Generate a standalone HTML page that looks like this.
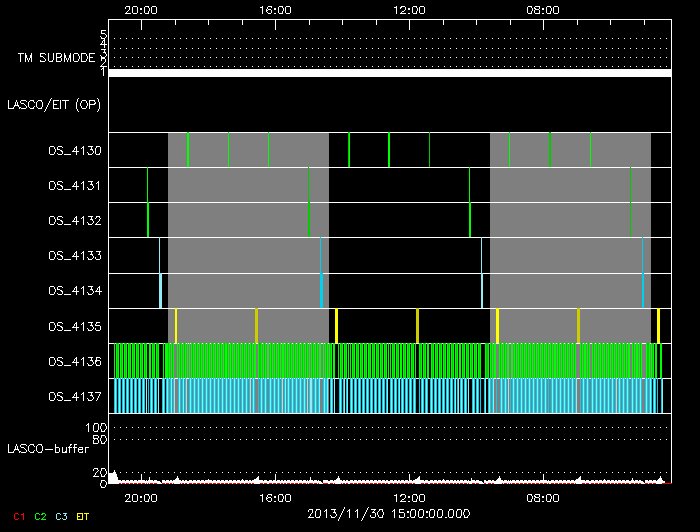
<!DOCTYPE html>
<html><head><meta charset="utf-8"><title>LASCO/EIT schedule plot</title>
<style>html,body{margin:0;padding:0;background:#000;font-family:"Liberation Sans",sans-serif;}svg{display:block}</style>
</head><body><svg width="700" height="532" viewBox="0 0 700 532" shape-rendering="crispEdges"><path fill="#ffffff" d="M126 6h4v1h-4zM133 6h4v1h-4zM145 6h4v1h-4zM152 6h4v1h-4zM262 6h1v1h-1zM268 6h4v1h-4zM279 6h4v1h-4zM286 6h4v1h-4zM396 6h1v1h-1zM401 6h4v1h-4zM413 6h4v1h-4zM420 6h4v1h-4zM528 6h4v1h-4zM535 6h5v1h-5zM547 6h4v1h-4zM554 6h4v1h-4zM148 7h1v1h-1zM260 7h3v1h-3zM271 7h1v1h-1zM282 7h1v1h-1zM394 7h3v1h-3zM400 7h2v1h-2zM416 7h1v1h-1zM531 7h1v1h-1zM534 7h1v1h-1zM550 7h1v1h-1zM125 7h1v2h-1zM267 7h1v2h-1zM400 8h1v1h-1zM534 8h2v1h-2zM539 7h1v2h-1zM129 7h1v3h-1zM140 8h2v2h-2zM266 9h1v1h-1zM268 9h3v1h-3zM274 8h2v2h-2zM405 7h1v3h-1zM408 8h2v2h-2zM535 9h4v1h-4zM542 8h2v2h-2zM128 10h1v1h-1zM149 8h1v3h-1zM266 10h2v1h-2zM283 8h1v3h-1zM404 10h1v1h-1zM417 8h1v3h-1zM532 8h1v3h-1zM551 8h1v3h-1zM127 11h1v1h-1zM266 11h1v1h-1zM402 11h2v1h-2zM126 12h1v1h-1zM132 7h1v6h-1zM137 7h1v6h-1zM144 7h1v6h-1zM148 11h1v2h-1zM151 7h1v6h-1zM156 7h1v6h-1zM267 12h1v1h-1zM271 10h1v3h-1zM278 7h1v6h-1zM282 11h1v2h-1zM285 7h1v6h-1zM290 7h1v6h-1zM401 12h1v1h-1zM412 7h1v6h-1zM416 11h1v2h-1zM419 7h1v6h-1zM424 7h1v6h-1zM527 7h1v6h-1zM531 11h1v2h-1zM534 10h1v3h-1zM539 10h1v3h-1zM546 7h1v6h-1zM550 11h1v2h-1zM553 7h1v6h-1zM558 7h1v6h-1zM125 13h6v1h-6zM133 13h4v1h-4zM140 13h2v1h-2zM145 13h4v1h-4zM152 13h4v1h-4zM262 8h1v6h-1zM268 13h3v1h-3zM274 13h2v1h-2zM279 13h4v1h-4zM286 13h4v1h-4zM396 8h1v6h-1zM400 13h6v1h-6zM408 13h2v1h-2zM413 13h4v1h-4zM420 13h4v1h-4zM528 13h4v1h-4zM535 13h5v1h-5zM542 13h2v1h-2zM547 13h4v1h-4zM554 13h4v1h-4zM108 19h564v1h-564zM175 20h1v5h-1zM208 20h1v5h-1zM242 20h1v5h-1zM309 20h1v5h-1zM342 20h1v5h-1zM376 20h1v5h-1zM443 20h1v5h-1zM476 20h1v5h-1zM510 20h1v5h-1zM577 20h1v5h-1zM610 20h1v5h-1zM644 20h1v5h-1zM141 20h1v10h-1zM275 20h1v10h-1zM409 20h1v10h-1zM543 20h1v10h-1zM101 30h5v1h-5zM101 31h1v2h-1zM101 33h4v1h-4zM105 34h1v1h-1zM100 36h1v1h-1zM106 35h1v2h-1zM101 37h1v1h-1zM105 37h1v1h-1zM101 38h4v1h-4zM114 38h1v1h-1zM120 38h1v1h-1zM126 38h1v1h-1zM132 38h1v1h-1zM138 38h1v1h-1zM144 38h1v1h-1zM150 38h1v1h-1zM156 38h1v1h-1zM162 38h1v1h-1zM168 38h1v1h-1zM174 38h1v1h-1zM180 38h1v1h-1zM186 38h1v1h-1zM192 38h1v1h-1zM198 38h1v1h-1zM204 38h1v1h-1zM210 38h1v1h-1zM216 38h1v1h-1zM222 38h1v1h-1zM228 38h1v1h-1zM234 38h1v1h-1zM240 38h1v1h-1zM246 38h1v1h-1zM252 38h1v1h-1zM258 38h1v1h-1zM264 38h1v1h-1zM270 38h1v1h-1zM276 38h1v1h-1zM282 38h1v1h-1zM288 38h1v1h-1zM294 38h1v1h-1zM300 38h1v1h-1zM306 38h1v1h-1zM312 38h1v1h-1zM318 38h1v1h-1zM324 38h1v1h-1zM330 38h1v1h-1zM336 38h1v1h-1zM342 38h1v1h-1zM348 38h1v1h-1zM354 38h1v1h-1zM360 38h1v1h-1zM366 38h1v1h-1zM372 38h1v1h-1zM378 38h1v1h-1zM384 38h1v1h-1zM390 38h1v1h-1zM396 38h1v1h-1zM402 38h1v1h-1zM408 38h1v1h-1zM414 38h1v1h-1zM420 38h1v1h-1zM426 38h1v1h-1zM432 38h1v1h-1zM438 38h1v1h-1zM444 38h1v1h-1zM450 38h1v1h-1zM456 38h1v1h-1zM462 38h1v1h-1zM468 38h1v1h-1zM474 38h1v1h-1zM480 38h1v1h-1zM486 38h1v1h-1zM492 38h1v1h-1zM498 38h1v1h-1zM504 38h1v1h-1zM510 38h1v1h-1zM516 38h1v1h-1zM522 38h1v1h-1zM528 38h1v1h-1zM534 38h1v1h-1zM540 38h1v1h-1zM546 38h1v1h-1zM552 38h1v1h-1zM558 38h1v1h-1zM564 38h1v1h-1zM570 38h1v1h-1zM576 38h1v1h-1zM582 38h1v1h-1zM588 38h1v1h-1zM594 38h1v1h-1zM600 38h1v1h-1zM606 38h1v1h-1zM612 38h1v1h-1zM618 38h1v1h-1zM624 38h1v1h-1zM630 38h1v1h-1zM636 38h1v1h-1zM642 38h1v1h-1zM648 38h1v1h-1zM654 38h1v1h-1zM660 38h1v1h-1zM666 38h1v1h-1zM104 39h1v1h-1zM103 40h2v1h-2zM102 41h1v2h-1zM101 43h1v1h-1zM104 41h1v3h-1zM100 44h7v1h-7zM104 45h1v3h-1zM114 48h1v1h-1zM120 48h1v1h-1zM126 48h1v1h-1zM132 48h1v1h-1zM138 48h1v1h-1zM144 48h1v1h-1zM150 48h1v1h-1zM156 48h1v1h-1zM162 48h1v1h-1zM168 48h1v1h-1zM174 48h1v1h-1zM180 48h1v1h-1zM186 48h1v1h-1zM192 48h1v1h-1zM198 48h1v1h-1zM204 48h1v1h-1zM210 48h1v1h-1zM216 48h1v1h-1zM222 48h1v1h-1zM228 48h1v1h-1zM234 48h1v1h-1zM240 48h1v1h-1zM246 48h1v1h-1zM252 48h1v1h-1zM258 48h1v1h-1zM264 48h1v1h-1zM270 48h1v1h-1zM276 48h1v1h-1zM282 48h1v1h-1zM288 48h1v1h-1zM294 48h1v1h-1zM300 48h1v1h-1zM306 48h1v1h-1zM312 48h1v1h-1zM318 48h1v1h-1zM324 48h1v1h-1zM330 48h1v1h-1zM336 48h1v1h-1zM342 48h1v1h-1zM348 48h1v1h-1zM354 48h1v1h-1zM360 48h1v1h-1zM366 48h1v1h-1zM372 48h1v1h-1zM378 48h1v1h-1zM384 48h1v1h-1zM390 48h1v1h-1zM396 48h1v1h-1zM402 48h1v1h-1zM408 48h1v1h-1zM414 48h1v1h-1zM420 48h1v1h-1zM426 48h1v1h-1zM432 48h1v1h-1zM438 48h1v1h-1zM444 48h1v1h-1zM450 48h1v1h-1zM456 48h1v1h-1zM462 48h1v1h-1zM468 48h1v1h-1zM474 48h1v1h-1zM480 48h1v1h-1zM486 48h1v1h-1zM492 48h1v1h-1zM498 48h1v1h-1zM504 48h1v1h-1zM510 48h1v1h-1zM516 48h1v1h-1zM522 48h1v1h-1zM528 48h1v1h-1zM534 48h1v1h-1zM540 48h1v1h-1zM546 48h1v1h-1zM552 48h1v1h-1zM558 48h1v1h-1zM564 48h1v1h-1zM570 48h1v1h-1zM576 48h1v1h-1zM582 48h1v1h-1zM588 48h1v1h-1zM594 48h1v1h-1zM600 48h1v1h-1zM606 48h1v1h-1zM612 48h1v1h-1zM618 48h1v1h-1zM624 48h1v1h-1zM630 48h1v1h-1zM636 48h1v1h-1zM642 48h1v1h-1zM648 48h1v1h-1zM654 48h1v1h-1zM660 48h1v1h-1zM666 48h1v1h-1zM101 49h5v1h-5zM104 50h1v2h-1zM103 52h3v1h-3zM18 53h6v1h-6zM40 53h5v1h-5zM56 53h5v1h-5zM74 53h4v1h-4zM81 53h5v1h-5zM89 53h6v1h-6zM105 53h1v1h-1zM25 53h1v2h-1zM31 53h1v2h-1zM45 54h1v1h-1zM64 53h1v2h-1zM70 53h1v2h-1zM40 54h1v2h-1zM61 54h1v2h-1zM78 54h1v2h-1zM86 54h1v2h-1zM100 55h1v1h-1zM106 54h1v2h-1zM40 56h3v1h-3zM56 54h1v3h-1zM60 56h2v1h-2zM89 54h1v3h-1zM101 56h1v1h-1zM105 56h1v1h-1zM25 55h2v3h-2zM30 55h2v3h-2zM43 57h1v1h-1zM56 57h5v1h-5zM64 55h2v3h-2zM69 55h2v3h-2zM89 57h4v1h-4zM114 57h1v1h-1zM120 57h1v1h-1zM126 57h1v1h-1zM132 57h1v1h-1zM138 57h1v1h-1zM144 57h1v1h-1zM150 57h1v1h-1zM156 57h1v1h-1zM162 57h1v1h-1zM168 57h1v1h-1zM174 57h1v1h-1zM180 57h1v1h-1zM186 57h1v1h-1zM192 57h1v1h-1zM198 57h1v1h-1zM204 57h1v1h-1zM210 57h1v1h-1zM216 57h1v1h-1zM222 57h1v1h-1zM228 57h1v1h-1zM234 57h1v1h-1zM240 57h1v1h-1zM246 57h1v1h-1zM252 57h1v1h-1zM258 57h1v1h-1zM264 57h1v1h-1zM270 57h1v1h-1zM276 57h1v1h-1zM282 57h1v1h-1zM288 57h1v1h-1zM294 57h1v1h-1zM300 57h1v1h-1zM306 57h1v1h-1zM312 57h1v1h-1zM318 57h1v1h-1zM324 57h1v1h-1zM330 57h1v1h-1zM336 57h1v1h-1zM342 57h1v1h-1zM348 57h1v1h-1zM354 57h1v1h-1zM360 57h1v1h-1zM366 57h1v1h-1zM372 57h1v1h-1zM378 57h1v1h-1zM384 57h1v1h-1zM390 57h1v1h-1zM396 57h1v1h-1zM402 57h1v1h-1zM408 57h1v1h-1zM414 57h1v1h-1zM420 57h1v1h-1zM426 57h1v1h-1zM432 57h1v1h-1zM438 57h1v1h-1zM444 57h1v1h-1zM450 57h1v1h-1zM456 57h1v1h-1zM462 57h1v1h-1zM468 57h1v1h-1zM474 57h1v1h-1zM480 57h1v1h-1zM486 57h1v1h-1zM492 57h1v1h-1zM498 57h1v1h-1zM504 57h1v1h-1zM510 57h1v1h-1zM516 57h1v1h-1zM522 57h1v1h-1zM528 57h1v1h-1zM534 57h1v1h-1zM540 57h1v1h-1zM546 57h1v1h-1zM552 57h1v1h-1zM558 57h1v1h-1zM564 57h1v1h-1zM570 57h1v1h-1zM576 57h1v1h-1zM582 57h1v1h-1zM588 57h1v1h-1zM594 57h1v1h-1zM600 57h1v1h-1zM606 57h1v1h-1zM612 57h1v1h-1zM618 57h1v1h-1zM624 57h1v1h-1zM630 57h1v1h-1zM636 57h1v1h-1zM642 57h1v1h-1zM648 57h1v1h-1zM654 57h1v1h-1zM660 57h1v1h-1zM666 57h1v1h-1zM44 58h1v1h-1zM79 56h1v3h-1zM87 56h1v3h-1zM101 57h4v2h-4zM27 58h1v2h-1zM29 58h1v2h-1zM53 53h1v7h-1zM66 58h1v2h-1zM68 58h1v2h-1zM40 60h1v1h-1zM45 59h1v2h-1zM48 53h1v8h-1zM52 60h1v1h-1zM56 58h1v3h-1zM61 58h1v3h-1zM73 54h1v7h-1zM78 59h1v2h-1zM81 54h1v7h-1zM86 59h1v2h-1zM89 58h1v3h-1zM101 59h1v2h-1zM20 54h1v8h-1zM25 58h1v4h-1zM28 60h1v2h-1zM31 58h1v4h-1zM40 61h5v1h-5zM49 61h4v1h-4zM56 61h5v1h-5zM64 58h1v4h-1zM67 60h1v2h-1zM70 58h1v4h-1zM74 61h4v1h-4zM81 61h5v1h-5zM89 61h6v1h-6zM105 59h1v3h-1zM104 62h1v1h-1zM103 63h1v1h-1zM102 64h1v1h-1zM101 65h1v1h-1zM100 66h7v1h-7zM114 66h1v1h-1zM120 66h1v1h-1zM126 66h1v1h-1zM132 66h1v1h-1zM138 66h1v1h-1zM144 66h1v1h-1zM150 66h1v1h-1zM156 66h1v1h-1zM162 66h1v1h-1zM168 66h1v1h-1zM174 66h1v1h-1zM180 66h1v1h-1zM186 66h1v1h-1zM192 66h1v1h-1zM198 66h1v1h-1zM204 66h1v1h-1zM210 66h1v1h-1zM216 66h1v1h-1zM222 66h1v1h-1zM228 66h1v1h-1zM234 66h1v1h-1zM240 66h1v1h-1zM246 66h1v1h-1zM252 66h1v1h-1zM258 66h1v1h-1zM264 66h1v1h-1zM270 66h1v1h-1zM276 66h1v1h-1zM282 66h1v1h-1zM288 66h1v1h-1zM294 66h1v1h-1zM300 66h1v1h-1zM306 66h1v1h-1zM312 66h1v1h-1zM318 66h1v1h-1zM324 66h1v1h-1zM330 66h1v1h-1zM336 66h1v1h-1zM342 66h1v1h-1zM348 66h1v1h-1zM354 66h1v1h-1zM360 66h1v1h-1zM366 66h1v1h-1zM372 66h1v1h-1zM378 66h1v1h-1zM384 66h1v1h-1zM390 66h1v1h-1zM396 66h1v1h-1zM402 66h1v1h-1zM408 66h1v1h-1zM414 66h1v1h-1zM420 66h1v1h-1zM426 66h1v1h-1zM432 66h1v1h-1zM438 66h1v1h-1zM444 66h1v1h-1zM450 66h1v1h-1zM456 66h1v1h-1zM462 66h1v1h-1zM468 66h1v1h-1zM474 66h1v1h-1zM480 66h1v1h-1zM486 66h1v1h-1zM492 66h1v1h-1zM498 66h1v1h-1zM504 66h1v1h-1zM510 66h1v1h-1zM516 66h1v1h-1zM522 66h1v1h-1zM528 66h1v1h-1zM534 66h1v1h-1zM540 66h1v1h-1zM546 66h1v1h-1zM552 66h1v1h-1zM558 66h1v1h-1zM564 66h1v1h-1zM570 66h1v1h-1zM576 66h1v1h-1zM582 66h1v1h-1zM588 66h1v1h-1zM594 66h1v1h-1zM600 66h1v1h-1zM606 66h1v1h-1zM612 66h1v1h-1zM618 66h1v1h-1zM624 66h1v1h-1zM630 66h1v1h-1zM636 66h1v1h-1zM642 66h1v1h-1zM648 66h1v1h-1zM654 66h1v1h-1zM660 66h1v1h-1zM666 66h1v1h-1zM103 67h1v1h-1zM102 68h2v1h-2zM108 20h1v49h-1zM671 20h1v49h-1zM101 69h1v1h-1zM103 69h1v7h-1zM108 69h564v8h-564zM51 98h1v1h-1zM78 98h1v1h-1zM97 98h1v1h-1zM21 100h5v1h-5zM30 100h4v1h-4zM38 100h4v1h-4zM50 99h1v2h-1zM53 100h6v1h-6zM62 100h7v1h-7zM82 100h4v1h-4zM89 100h6v1h-6zM16 100h1v2h-1zM26 101h1v1h-1zM29 101h1v1h-1zM33 101h1v1h-1zM37 101h1v1h-1zM41 101h1v1h-1zM77 99h1v3h-1zM94 101h1v1h-1zM98 99h1v3h-1zM20 101h1v2h-1zM34 102h1v1h-1zM49 101h1v2h-1zM81 101h1v2h-1zM86 101h1v2h-1zM95 102h1v1h-1zM21 103h3v1h-3zM53 101h1v3h-1zM89 101h1v3h-1zM94 103h2v1h-2zM15 102h1v3h-1zM17 102h1v3h-1zM24 104h1v1h-1zM48 103h1v2h-1zM53 104h4v1h-4zM89 104h6v1h-6zM14 105h5v1h-5zM25 105h1v1h-1zM80 103h1v3h-1zM87 103h1v3h-1zM14 106h1v1h-1zM18 106h1v1h-1zM28 102h1v5h-1zM34 106h1v1h-1zM36 102h1v5h-1zM42 102h1v5h-1zM47 105h1v2h-1zM8 100h1v8h-1zM13 107h1v1h-1zM19 107h2v1h-2zM26 106h1v2h-1zM29 107h1v1h-1zM33 107h1v1h-1zM37 107h1v1h-1zM41 107h1v1h-1zM53 105h1v3h-1zM81 106h1v2h-1zM86 106h1v2h-1zM8 108h6v1h-6zM19 108h1v1h-1zM21 108h5v1h-5zM30 108h4v1h-4zM38 108h4v1h-4zM46 107h1v2h-1zM53 108h6v1h-6zM60 100h1v9h-1zM65 101h1v8h-1zM76 102h1v7h-1zM82 108h4v1h-4zM89 105h1v4h-1zM99 102h1v7h-1zM45 109h1v2h-1zM77 109h1v2h-1zM98 109h1v2h-1zM44 111h1v1h-1zM78 111h1v1h-1zM97 111h1v1h-1zM108 77h1v55h-1zM671 77h1v55h-1zM108 132h79v1h-79zM189 132h39v1h-39zM229 132h39v1h-39zM269 132h79v1h-79zM350 132h38v1h-38zM390 132h39v1h-39zM430 132h79v1h-79zM510 132h39v1h-39zM551 132h39v1h-39zM591 132h81v1h-81zM50 146h4v1h-4zM58 146h4v1h-4zM76 146h1v1h-1zM83 146h1v1h-1zM88 146h5v1h-5zM96 146h4v1h-4zM62 147h1v1h-1zM75 147h2v1h-2zM82 147h2v1h-2zM96 147h1v1h-1zM54 147h1v2h-1zM57 147h1v2h-1zM81 148h1v1h-1zM91 147h1v2h-1zM57 149h3v1h-3zM74 148h1v2h-1zM90 149h3v1h-3zM60 150h2v1h-2zM73 150h1v1h-1zM76 148h1v3h-1zM92 150h1v1h-1zM55 149h1v3h-1zM61 151h2v1h-2zM72 151h7v1h-7zM87 152h1v1h-1zM93 151h1v2h-1zM100 147h1v6h-1zM49 147h1v7h-1zM54 152h1v2h-1zM57 153h1v1h-1zM62 152h1v2h-1zM88 153h1v1h-1zM92 153h1v1h-1zM95 148h1v6h-1zM99 153h1v1h-1zM50 154h4v1h-4zM58 154h4v1h-4zM64 154h7v1h-7zM76 152h1v3h-1zM83 148h1v7h-1zM88 154h4v1h-4zM96 154h4v1h-4zM108 133h1v34h-1zM671 133h1v34h-1zM108 167h39v1h-39zM148 167h160v1h-160zM309 167h160v1h-160zM470 167h160v1h-160zM631 167h41v1h-41zM50 181h4v1h-4zM58 181h4v1h-4zM76 181h1v1h-1zM83 181h1v1h-1zM88 181h5v1h-5zM98 181h1v1h-1zM62 182h1v1h-1zM75 182h2v1h-2zM82 182h2v1h-2zM97 182h2v1h-2zM54 182h1v2h-1zM57 182h1v2h-1zM81 183h1v1h-1zM91 182h1v2h-1zM96 183h1v1h-1zM57 184h3v1h-3zM74 183h1v2h-1zM90 184h3v1h-3zM60 185h2v1h-2zM73 185h1v1h-1zM76 183h1v3h-1zM92 185h1v1h-1zM55 184h1v3h-1zM61 186h2v1h-2zM72 186h7v1h-7zM87 187h1v1h-1zM93 186h1v2h-1zM49 182h1v7h-1zM54 187h1v2h-1zM57 188h1v1h-1zM62 187h1v2h-1zM88 188h1v1h-1zM92 188h1v1h-1zM50 189h4v1h-4zM58 189h4v1h-4zM64 189h7v1h-7zM76 187h1v3h-1zM83 183h1v7h-1zM88 189h4v1h-4zM98 183h1v7h-1zM108 168h1v34h-1zM671 168h1v34h-1zM108 202h39v1h-39zM149 202h159v1h-159zM310 202h159v1h-159zM471 202h159v1h-159zM631 202h41v1h-41zM50 216h4v1h-4zM58 216h4v1h-4zM76 216h1v1h-1zM83 216h1v1h-1zM88 216h5v1h-5zM96 216h4v1h-4zM62 217h1v1h-1zM75 217h2v1h-2zM82 217h2v1h-2zM96 217h1v1h-1zM99 217h1v1h-1zM54 217h1v2h-1zM57 217h1v2h-1zM81 218h1v1h-1zM91 217h1v2h-1zM95 218h1v1h-1zM100 218h1v1h-1zM57 219h3v1h-3zM74 218h1v2h-1zM90 219h3v1h-3zM60 220h2v1h-2zM73 220h1v1h-1zM76 218h1v3h-1zM92 220h1v1h-1zM99 219h1v2h-1zM55 219h1v3h-1zM61 221h2v1h-2zM72 221h7v1h-7zM98 221h1v1h-1zM87 222h1v1h-1zM93 221h1v2h-1zM97 222h1v1h-1zM49 217h1v7h-1zM54 222h1v2h-1zM57 223h1v1h-1zM62 222h1v2h-1zM88 223h1v1h-1zM92 223h1v1h-1zM96 223h1v1h-1zM50 224h4v1h-4zM58 224h4v1h-4zM64 224h7v1h-7zM76 222h1v3h-1zM83 218h1v7h-1zM88 224h4v1h-4zM95 224h6v1h-6zM108 203h1v34h-1zM671 203h1v34h-1zM108 237h51v1h-51zM160 237h160v1h-160zM321 237h160v1h-160zM482 237h160v1h-160zM643 237h29v1h-29zM50 251h4v1h-4zM58 251h4v1h-4zM76 251h1v1h-1zM83 251h1v1h-1zM88 251h5v1h-5zM96 251h5v1h-5zM62 252h1v1h-1zM75 252h2v1h-2zM82 252h2v1h-2zM54 252h1v2h-1zM57 252h1v2h-1zM81 253h1v1h-1zM91 252h1v2h-1zM99 252h1v2h-1zM57 254h3v1h-3zM74 253h1v2h-1zM90 254h3v1h-3zM98 254h2v1h-2zM60 255h2v1h-2zM73 255h1v1h-1zM76 253h1v3h-1zM92 255h1v1h-1zM55 254h1v3h-1zM61 256h2v1h-2zM72 256h7v1h-7zM87 257h1v1h-1zM93 256h1v2h-1zM49 252h1v7h-1zM54 257h1v2h-1zM57 258h1v1h-1zM62 257h1v2h-1zM88 258h1v1h-1zM92 258h1v1h-1zM95 257h1v2h-1zM100 255h1v4h-1zM50 259h4v1h-4zM58 259h4v1h-4zM64 259h7v1h-7zM76 257h1v3h-1zM83 253h1v7h-1zM88 259h4v1h-4zM96 259h4v1h-4zM108 238h1v35h-1zM671 238h1v35h-1zM108 273h51v1h-51zM162 273h158v1h-158zM323 273h158v1h-158zM483 273h159v1h-159zM644 273h28v1h-28zM50 286h4v1h-4zM58 286h4v1h-4zM76 286h1v1h-1zM83 286h1v1h-1zM88 286h5v1h-5zM99 286h1v1h-1zM62 287h1v1h-1zM75 287h2v1h-2zM82 287h2v1h-2zM98 287h2v1h-2zM54 287h1v2h-1zM57 287h1v2h-1zM81 288h1v1h-1zM91 287h1v2h-1zM57 289h3v1h-3zM74 288h1v2h-1zM90 289h3v1h-3zM97 288h1v2h-1zM60 290h2v1h-2zM73 290h1v1h-1zM76 288h1v3h-1zM92 290h1v1h-1zM96 290h1v1h-1zM99 288h1v3h-1zM55 289h1v3h-1zM61 291h2v1h-2zM72 291h7v1h-7zM95 291h7v1h-7zM87 292h1v1h-1zM93 291h1v2h-1zM49 287h1v7h-1zM54 292h1v2h-1zM57 293h1v1h-1zM62 292h1v2h-1zM88 293h1v1h-1zM92 293h1v1h-1zM50 294h4v1h-4zM58 294h4v1h-4zM64 294h7v1h-7zM76 292h1v3h-1zM83 288h1v7h-1zM88 294h4v1h-4zM99 292h1v3h-1zM108 274h1v34h-1zM671 274h1v34h-1zM108 308h67v1h-67zM177 308h78v1h-78zM258 308h77v1h-77zM338 308h78v1h-78zM419 308h77v1h-77zM499 308h78v1h-78zM580 308h77v1h-77zM660 308h12v1h-12zM50 322h4v1h-4zM58 322h4v1h-4zM76 322h1v1h-1zM83 322h1v1h-1zM88 322h5v1h-5zM96 322h4v1h-4zM62 323h1v1h-1zM75 323h2v1h-2zM82 323h2v1h-2zM96 323h1v1h-1zM54 323h1v2h-1zM57 323h1v2h-1zM81 324h1v1h-1zM91 323h1v2h-1zM95 324h1v1h-1zM57 325h3v1h-3zM74 324h1v2h-1zM90 325h3v1h-3zM95 325h5v1h-5zM60 326h2v1h-2zM73 326h1v1h-1zM76 324h1v3h-1zM92 326h1v1h-1zM55 325h1v3h-1zM61 327h2v1h-2zM72 327h7v1h-7zM87 328h1v1h-1zM93 327h1v2h-1zM49 323h1v7h-1zM54 328h1v2h-1zM57 329h1v1h-1zM62 328h1v2h-1zM88 329h1v1h-1zM92 329h1v1h-1zM95 328h1v2h-1zM100 326h1v4h-1zM50 330h4v1h-4zM58 330h4v1h-4zM64 330h7v1h-7zM76 328h1v3h-1zM83 324h1v7h-1zM88 330h4v1h-4zM96 330h4v1h-4zM108 309h1v34h-1zM671 309h1v34h-1zM108 343h6v1h-6zM115 343h1v1h-1zM119 343h1v1h-1zM123 343h1v1h-1zM127 343h1v1h-1zM131 343h1v1h-1zM135 343h1v1h-1zM139 343h1v1h-1zM143 343h1v1h-1zM147 343h2v1h-2zM151 343h1v1h-1zM155 343h1v1h-1zM159 343h4v1h-4zM164 343h1v1h-1zM170 343h1v1h-1zM174 343h3v1h-3zM178 343h1v1h-1zM182 343h1v1h-1zM186 343h1v1h-1zM188 343h1v1h-1zM190 343h1v1h-1zM194 343h1v1h-1zM198 343h1v1h-1zM202 343h1v1h-1zM206 343h1v1h-1zM210 343h1v1h-1zM214 343h1v1h-1zM218 343h1v1h-1zM222 343h1v1h-1zM229 343h1v1h-1zM233 343h1v1h-1zM237 343h1v1h-1zM241 343h1v1h-1zM245 343h1v1h-1zM249 343h1v1h-1zM253 343h1v1h-1zM256 343h2v1h-2zM262 343h1v1h-1zM266 343h1v1h-1zM269 343h1v1h-1zM273 343h1v1h-1zM277 343h1v1h-1zM281 343h1v1h-1zM284 343h1v1h-1zM288 343h1v1h-1zM292 343h1v1h-1zM296 343h1v1h-1zM300 343h1v1h-1zM304 343h1v1h-1zM308 343h1v1h-1zM310 343h1v1h-1zM314 343h1v1h-1zM318 343h1v1h-1zM321 343h2v1h-2zM324 343h1v1h-1zM328 343h1v1h-1zM332 343h1v1h-1zM335 343h3v1h-3zM339 343h1v1h-1zM343 343h1v1h-1zM347 343h1v1h-1zM349 343h1v1h-1zM351 343h1v1h-1zM355 343h1v1h-1zM359 343h1v1h-1zM363 343h1v1h-1zM367 343h1v1h-1zM371 343h1v1h-1zM375 343h1v1h-1zM379 343h1v1h-1zM383 343h1v1h-1zM387 343h1v1h-1zM389 343h1v1h-1zM391 343h1v1h-1zM395 343h1v1h-1zM399 343h1v1h-1zM402 343h1v1h-1zM406 343h1v1h-1zM410 343h1v1h-1zM414 343h1v1h-1zM416 343h3v1h-3zM422 343h1v1h-1zM426 343h1v1h-1zM429 343h2v1h-2zM434 343h1v1h-1zM438 343h1v1h-1zM442 343h1v1h-1zM446 343h1v1h-1zM450 343h1v1h-1zM454 343h1v1h-1zM458 343h1v1h-1zM461 343h1v1h-1zM465 343h1v1h-1zM469 343h1v1h-1zM473 343h1v1h-1zM477 343h1v1h-1zM481 343h4v1h-4zM489 343h1v1h-1zM493 343h1v1h-1zM496 343h3v1h-3zM502 343h1v1h-1zM506 343h1v1h-1zM509 343h2v1h-2zM513 343h1v1h-1zM517 343h1v1h-1zM521 343h1v1h-1zM525 343h1v1h-1zM529 343h1v1h-1zM533 343h1v1h-1zM537 343h1v1h-1zM541 343h1v1h-1zM545 343h1v1h-1zM549 343h1v1h-1zM553 343h1v1h-1zM556 343h1v1h-1zM560 343h1v1h-1zM564 343h1v1h-1zM568 343h1v1h-1zM572 343h1v1h-1zM576 343h4v1h-4zM583 343h1v1h-1zM586 343h1v1h-1zM590 343h2v1h-2zM595 343h1v1h-1zM599 343h1v1h-1zM603 343h1v1h-1zM607 343h1v1h-1zM611 343h1v1h-1zM615 343h1v1h-1zM619 343h1v1h-1zM623 343h1v1h-1zM627 343h1v1h-1zM630 343h2v1h-2zM635 343h1v1h-1zM638 343h1v1h-1zM642 343h4v1h-4zM650 343h1v1h-1zM654 343h1v1h-1zM657 343h3v1h-3zM662 343h10v1h-10zM50 357h4v1h-4zM58 357h4v1h-4zM76 357h1v1h-1zM83 357h1v1h-1zM88 357h5v1h-5zM96 357h4v1h-4zM62 358h1v1h-1zM75 358h2v1h-2zM82 358h2v1h-2zM100 358h1v1h-1zM54 358h1v2h-1zM57 358h1v2h-1zM81 359h1v1h-1zM91 358h1v2h-1zM96 358h1v2h-1zM57 360h3v1h-3zM74 359h1v2h-1zM90 360h3v1h-3zM95 360h5v1h-5zM60 361h2v1h-2zM73 361h1v1h-1zM76 359h1v3h-1zM92 361h1v1h-1zM95 361h2v1h-2zM55 360h1v3h-1zM61 362h2v1h-2zM72 362h7v1h-7zM87 363h1v1h-1zM93 362h1v2h-1zM95 362h1v2h-1zM49 358h1v7h-1zM54 363h1v2h-1zM57 364h1v1h-1zM62 363h1v2h-1zM88 364h1v1h-1zM92 364h1v1h-1zM96 364h1v1h-1zM100 361h1v4h-1zM50 365h4v1h-4zM58 365h4v1h-4zM64 365h7v1h-7zM76 363h1v3h-1zM83 359h1v7h-1zM88 365h4v1h-4zM96 365h4v1h-4zM108 344h1v34h-1zM671 344h1v34h-1zM108 378h6v1h-6zM117 378h1v1h-1zM121 378h1v1h-1zM125 378h1v1h-1zM129 378h1v1h-1zM133 378h1v1h-1zM137 378h1v1h-1zM141 378h1v1h-1zM145 378h1v1h-1zM147 378h1v1h-1zM149 378h1v1h-1zM153 378h1v1h-1zM157 378h1v1h-1zM159 378h3v1h-3zM165 378h1v1h-1zM169 378h1v1h-1zM172 378h1v1h-1zM175 378h3v1h-3zM181 378h1v1h-1zM184 378h1v1h-1zM187 378h2v1h-2zM192 378h1v1h-1zM196 378h1v1h-1zM200 378h1v1h-1zM204 378h1v1h-1zM208 378h1v1h-1zM212 378h1v1h-1zM216 378h1v1h-1zM220 378h1v1h-1zM224 378h1v1h-1zM228 378h1v1h-1zM232 378h1v1h-1zM236 378h1v1h-1zM240 378h1v1h-1zM244 378h1v1h-1zM248 378h1v1h-1zM251 378h1v1h-1zM255 378h3v1h-3zM259 378h1v1h-1zM263 378h1v1h-1zM267 378h2v1h-2zM272 378h1v1h-1zM276 378h1v1h-1zM280 378h1v1h-1zM283 378h1v1h-1zM286 378h1v1h-1zM290 378h1v1h-1zM294 378h1v1h-1zM298 378h1v1h-1zM302 378h1v1h-1zM306 378h1v1h-1zM308 378h1v1h-1zM313 378h1v1h-1zM317 378h1v1h-1zM320 378h3v1h-3zM328 378h2v1h-2zM333 378h1v1h-1zM335 378h4v1h-4zM342 378h1v1h-1zM345 378h1v1h-1zM348 378h2v1h-2zM353 378h1v1h-1zM357 378h1v1h-1zM361 378h1v1h-1zM365 378h1v1h-1zM369 378h1v1h-1zM373 378h1v1h-1zM377 378h1v1h-1zM381 378h1v1h-1zM385 378h1v1h-1zM388 378h2v1h-2zM393 378h1v1h-1zM397 378h1v1h-1zM400 378h1v1h-1zM404 378h1v1h-1zM408 378h1v1h-1zM412 378h1v1h-1zM416 378h3v1h-3zM420 378h1v1h-1zM424 378h1v1h-1zM428 378h2v1h-2zM433 378h1v1h-1zM437 378h1v1h-1zM441 378h1v1h-1zM445 378h1v1h-1zM449 378h1v1h-1zM453 378h1v1h-1zM456 378h1v1h-1zM459 378h1v1h-1zM463 378h1v1h-1zM467 378h1v1h-1zM469 378h3v1h-3zM475 378h1v1h-1zM479 378h1v1h-1zM481 378h3v1h-3zM486 378h2v1h-2zM491 378h1v1h-1zM494 378h2v1h-2zM497 378h3v1h-3zM503 378h1v1h-1zM507 378h1v1h-1zM509 378h1v1h-1zM511 378h1v1h-1zM515 378h1v1h-1zM519 378h1v1h-1zM523 378h1v1h-1zM527 378h1v1h-1zM531 378h1v1h-1zM535 378h1v1h-1zM539 378h1v1h-1zM543 378h1v1h-1zM547 378h1v1h-1zM549 378h2v1h-2zM554 378h1v1h-1zM558 378h1v1h-1zM562 378h1v1h-1zM566 378h1v1h-1zM570 378h1v1h-1zM574 378h1v1h-1zM577 378h3v1h-3zM581 378h1v1h-1zM585 378h1v1h-1zM589 378h2v1h-2zM594 378h1v1h-1zM598 378h1v1h-1zM602 378h1v1h-1zM606 378h1v1h-1zM610 378h1v1h-1zM614 378h1v1h-1zM617 378h1v1h-1zM621 378h1v1h-1zM625 378h1v1h-1zM629 378h2v1h-2zM634 378h1v1h-1zM638 378h1v1h-1zM642 378h3v1h-3zM648 378h1v1h-1zM652 378h1v1h-1zM656 378h1v1h-1zM658 378h3v1h-3zM663 378h9v1h-9zM50 392h4v1h-4zM58 392h4v1h-4zM76 392h1v1h-1zM83 392h1v1h-1zM88 392h5v1h-5zM95 392h6v1h-6zM62 393h1v1h-1zM75 393h2v1h-2zM82 393h2v1h-2zM100 393h1v1h-1zM54 393h1v2h-1zM57 393h1v2h-1zM81 394h1v1h-1zM91 393h1v2h-1zM57 395h3v1h-3zM74 394h1v2h-1zM90 395h3v1h-3zM99 394h1v2h-1zM60 396h2v1h-2zM73 396h1v1h-1zM76 394h1v3h-1zM92 396h1v1h-1zM55 395h1v3h-1zM61 397h2v1h-2zM72 397h7v1h-7zM98 396h1v2h-1zM87 398h1v1h-1zM93 397h1v2h-1zM49 393h1v7h-1zM54 398h1v2h-1zM57 399h1v1h-1zM62 398h1v2h-1zM88 399h1v1h-1zM92 399h1v1h-1zM97 398h1v2h-1zM50 400h4v1h-4zM58 400h4v1h-4zM64 400h7v1h-7zM76 398h1v3h-1zM83 394h1v7h-1zM88 400h4v1h-4zM96 400h1v1h-1zM108 379h1v34h-1zM671 379h1v34h-1zM108 413h564v1h-564zM88 423h1v1h-1zM94 423h4v1h-4zM101 423h4v1h-4zM87 424h2v1h-2zM94 424h1v1h-1zM86 425h1v1h-1zM101 424h1v2h-1zM105 424h1v2h-1zM114 427h1v1h-1zM120 427h1v1h-1zM126 427h1v1h-1zM132 427h1v1h-1zM138 427h1v1h-1zM144 427h1v1h-1zM150 427h1v1h-1zM156 427h1v1h-1zM162 427h1v1h-1zM168 427h1v1h-1zM174 427h1v1h-1zM180 427h1v1h-1zM186 427h1v1h-1zM192 427h1v1h-1zM198 427h1v1h-1zM204 427h1v1h-1zM210 427h1v1h-1zM216 427h1v1h-1zM222 427h1v1h-1zM228 427h1v1h-1zM234 427h1v1h-1zM240 427h1v1h-1zM246 427h1v1h-1zM252 427h1v1h-1zM258 427h1v1h-1zM264 427h1v1h-1zM270 427h1v1h-1zM276 427h1v1h-1zM282 427h1v1h-1zM288 427h1v1h-1zM294 427h1v1h-1zM300 427h1v1h-1zM306 427h1v1h-1zM312 427h1v1h-1zM318 427h1v1h-1zM324 427h1v1h-1zM330 427h1v1h-1zM336 427h1v1h-1zM342 427h1v1h-1zM348 427h1v1h-1zM354 427h1v1h-1zM360 427h1v1h-1zM366 427h1v1h-1zM372 427h1v1h-1zM378 427h1v1h-1zM384 427h1v1h-1zM390 427h1v1h-1zM396 427h1v1h-1zM402 427h1v1h-1zM408 427h1v1h-1zM414 427h1v1h-1zM420 427h1v1h-1zM426 427h1v1h-1zM432 427h1v1h-1zM438 427h1v1h-1zM444 427h1v1h-1zM450 427h1v1h-1zM456 427h1v1h-1zM462 427h1v1h-1zM468 427h1v1h-1zM474 427h1v1h-1zM480 427h1v1h-1zM486 427h1v1h-1zM492 427h1v1h-1zM498 427h1v1h-1zM504 427h1v1h-1zM510 427h1v1h-1zM516 427h1v1h-1zM522 427h1v1h-1zM528 427h1v1h-1zM534 427h1v1h-1zM540 427h1v1h-1zM546 427h1v1h-1zM552 427h1v1h-1zM558 427h1v1h-1zM564 427h1v1h-1zM570 427h1v1h-1zM576 427h1v1h-1zM582 427h1v1h-1zM588 427h1v1h-1zM594 427h1v1h-1zM600 427h1v1h-1zM606 427h1v1h-1zM612 427h1v1h-1zM618 427h1v1h-1zM624 427h1v1h-1zM630 427h1v1h-1zM636 427h1v1h-1zM642 427h1v1h-1zM648 427h1v1h-1zM654 427h1v1h-1zM660 427h1v1h-1zM666 427h1v1h-1zM100 426h1v3h-1zM106 426h1v3h-1zM98 424h1v6h-1zM105 429h1v1h-1zM93 425h1v6h-1zM97 430h1v1h-1zM101 429h1v2h-1zM104 430h1v1h-1zM88 425h1v7h-1zM94 431h4v1h-4zM101 431h4v1h-4zM93 435h5v1h-5zM101 435h4v1h-4zM93 436h1v2h-1zM98 436h1v2h-1zM101 436h1v2h-1zM105 436h1v2h-1zM93 438h5v1h-5zM94 439h1v1h-1zM97 439h1v1h-1zM114 439h1v1h-1zM120 439h1v1h-1zM126 439h1v1h-1zM132 439h1v1h-1zM138 439h1v1h-1zM144 439h1v1h-1zM150 439h1v1h-1zM156 439h1v1h-1zM162 439h1v1h-1zM168 439h1v1h-1zM174 439h1v1h-1zM180 439h1v1h-1zM186 439h1v1h-1zM192 439h1v1h-1zM198 439h1v1h-1zM204 439h1v1h-1zM210 439h1v1h-1zM216 439h1v1h-1zM222 439h1v1h-1zM228 439h1v1h-1zM234 439h1v1h-1zM240 439h1v1h-1zM246 439h1v1h-1zM252 439h1v1h-1zM258 439h1v1h-1zM264 439h1v1h-1zM270 439h1v1h-1zM276 439h1v1h-1zM282 439h1v1h-1zM288 439h1v1h-1zM294 439h1v1h-1zM300 439h1v1h-1zM306 439h1v1h-1zM312 439h1v1h-1zM318 439h1v1h-1zM324 439h1v1h-1zM330 439h1v1h-1zM336 439h1v1h-1zM342 439h1v1h-1zM348 439h1v1h-1zM354 439h1v1h-1zM360 439h1v1h-1zM366 439h1v1h-1zM372 439h1v1h-1zM378 439h1v1h-1zM384 439h1v1h-1zM390 439h1v1h-1zM396 439h1v1h-1zM402 439h1v1h-1zM408 439h1v1h-1zM414 439h1v1h-1zM420 439h1v1h-1zM426 439h1v1h-1zM432 439h1v1h-1zM438 439h1v1h-1zM444 439h1v1h-1zM450 439h1v1h-1zM456 439h1v1h-1zM462 439h1v1h-1zM468 439h1v1h-1zM474 439h1v1h-1zM480 439h1v1h-1zM486 439h1v1h-1zM492 439h1v1h-1zM498 439h1v1h-1zM504 439h1v1h-1zM510 439h1v1h-1zM516 439h1v1h-1zM522 439h1v1h-1zM528 439h1v1h-1zM534 439h1v1h-1zM540 439h1v1h-1zM546 439h1v1h-1zM552 439h1v1h-1zM558 439h1v1h-1zM564 439h1v1h-1zM570 439h1v1h-1zM576 439h1v1h-1zM582 439h1v1h-1zM588 439h1v1h-1zM594 439h1v1h-1zM600 439h1v1h-1zM606 439h1v1h-1zM612 439h1v1h-1zM618 439h1v1h-1zM624 439h1v1h-1zM630 439h1v1h-1zM636 439h1v1h-1zM642 439h1v1h-1zM648 439h1v1h-1zM654 439h1v1h-1zM660 439h1v1h-1zM666 439h1v1h-1zM100 438h1v3h-1zM106 438h1v3h-1zM105 441h1v1h-1zM93 440h1v3h-1zM98 440h1v3h-1zM101 441h1v2h-1zM104 442h1v1h-1zM93 443h5v1h-5zM101 443h4v1h-4zM21 444h5v1h-5zM30 444h4v1h-4zM38 444h4v1h-4zM70 444h2v1h-2zM74 444h3v1h-3zM16 444h1v2h-1zM26 445h1v1h-1zM29 445h1v1h-1zM33 445h1v1h-1zM37 445h1v1h-1zM41 445h1v1h-1zM70 445h1v1h-1zM20 445h1v2h-1zM34 446h1v1h-1zM55 444h1v3h-1zM69 446h1v1h-1zM74 445h1v2h-1zM21 447h3v1h-3zM55 447h4v1h-4zM68 447h4v1h-4zM73 447h4v1h-4zM79 447h4v1h-4zM85 447h4v1h-4zM15 446h1v3h-1zM17 446h1v3h-1zM24 448h1v1h-1zM78 448h1v1h-1zM82 448h1v1h-1zM14 449h5v1h-5zM25 449h1v1h-1zM45 449h8v1h-8zM78 449h5v1h-5zM14 450h1v1h-1zM18 450h1v1h-1zM28 446h1v5h-1zM34 450h1v1h-1zM36 446h1v5h-1zM42 446h1v5h-1zM66 447h1v4h-1zM8 444h1v8h-1zM13 451h1v1h-1zM19 451h2v1h-2zM26 450h1v2h-1zM29 451h1v1h-1zM33 451h1v1h-1zM37 451h1v1h-1zM41 451h1v1h-1zM55 448h1v4h-1zM59 448h1v4h-1zM62 447h1v5h-1zM65 451h2v1h-2zM78 450h1v2h-1zM82 451h1v1h-1zM8 452h6v1h-6zM19 452h1v1h-1zM21 452h5v1h-5zM30 452h4v1h-4zM38 452h4v1h-4zM55 452h4v1h-4zM62 452h5v1h-5zM69 448h1v5h-1zM74 448h1v5h-1zM79 452h4v1h-4zM85 448h1v5h-1zM94 468h4v1h-4zM101 468h4v1h-4zM97 469h1v1h-1zM93 469h1v2h-1zM98 470h1v1h-1zM101 469h1v2h-1zM105 469h1v2h-1zM97 471h1v1h-1zM114 470h1v2h-1zM96 472h1v1h-1zM108 414h1v59h-1zM113 472h3v1h-3zM120 472h1v1h-1zM126 472h1v1h-1zM132 472h1v1h-1zM138 472h1v1h-1zM144 472h1v1h-1zM150 472h1v1h-1zM156 472h1v1h-1zM162 472h1v1h-1zM168 472h1v1h-1zM174 472h1v1h-1zM180 472h1v1h-1zM186 472h1v1h-1zM192 472h1v1h-1zM198 472h1v1h-1zM204 472h1v1h-1zM210 472h1v1h-1zM216 472h1v1h-1zM222 472h1v1h-1zM228 472h1v1h-1zM234 472h1v1h-1zM240 472h1v1h-1zM246 472h1v1h-1zM252 472h1v1h-1zM258 472h1v1h-1zM264 472h1v1h-1zM270 472h1v1h-1zM276 472h1v1h-1zM282 472h1v1h-1zM288 472h1v1h-1zM294 472h1v1h-1zM300 472h1v1h-1zM306 472h1v1h-1zM312 472h1v1h-1zM318 472h1v1h-1zM324 472h1v1h-1zM330 472h1v1h-1zM336 472h1v1h-1zM342 472h1v1h-1zM348 472h1v1h-1zM354 472h1v1h-1zM360 472h1v1h-1zM366 472h1v1h-1zM372 472h1v1h-1zM378 472h1v1h-1zM384 472h1v1h-1zM390 472h1v1h-1zM396 472h1v1h-1zM402 472h1v1h-1zM408 472h1v1h-1zM414 472h1v1h-1zM420 472h1v1h-1zM426 472h1v1h-1zM432 472h1v1h-1zM438 472h1v1h-1zM444 472h1v1h-1zM450 472h1v1h-1zM456 472h1v1h-1zM462 472h1v1h-1zM468 472h1v1h-1zM474 472h1v1h-1zM480 472h1v1h-1zM486 472h1v1h-1zM492 472h1v1h-1zM498 472h1v1h-1zM504 472h1v1h-1zM510 472h1v1h-1zM516 472h1v1h-1zM522 472h1v1h-1zM528 472h1v1h-1zM534 472h1v1h-1zM540 472h1v1h-1zM546 472h1v1h-1zM552 472h1v1h-1zM558 472h1v1h-1zM564 472h1v1h-1zM570 472h1v1h-1zM576 472h1v1h-1zM582 472h1v1h-1zM588 472h1v1h-1zM594 472h1v1h-1zM600 472h1v1h-1zM606 472h1v1h-1zM612 472h1v1h-1zM618 472h1v1h-1zM624 472h1v1h-1zM630 472h1v1h-1zM636 472h1v1h-1zM642 472h1v1h-1zM648 472h1v1h-1zM654 472h1v1h-1zM660 472h1v1h-1zM666 472h1v1h-1zM100 471h1v3h-1zM106 471h1v3h-1zM108 473h8v1h-8zM95 473h1v2h-1zM105 474h1v1h-1zM94 475h1v1h-1zM101 474h1v2h-1zM104 475h1v1h-1zM93 476h6v1h-6zM101 476h4v1h-4zM108 474h9v3h-9zM258 476h1v1h-1zM419 476h1v1h-1zM580 476h1v1h-1zM177 476h1v2h-1zM257 477h2v1h-2zM338 476h1v2h-1zM418 477h2v1h-2zM499 476h1v2h-1zM579 477h2v1h-2zM660 476h1v2h-1zM176 478h3v1h-3zM256 478h3v1h-3zM337 478h3v1h-3zM417 478h3v1h-3zM498 478h3v1h-3zM578 478h3v1h-3zM659 478h3v1h-3zM108 477h10v3h-10zM141 474h1v6h-1zM149 477h1v3h-1zM175 479h4v1h-4zM208 479h1v1h-1zM242 479h1v1h-1zM254 479h5v1h-5zM275 474h1v6h-1zM310 477h1v3h-1zM336 479h4v1h-4zM409 474h1v6h-1zM415 479h5v1h-5zM443 479h1v1h-1zM471 478h1v2h-1zM497 479h4v1h-4zM543 474h1v6h-1zM576 479h5v1h-5zM604 479h1v1h-1zM632 478h1v2h-1zM658 479h4v1h-4zM101 480h4v1h-4zM108 480h13v1h-13zM122 480h3v1h-3zM126 480h3v1h-3zM130 480h3v1h-3zM134 480h3v1h-3zM138 480h7v1h-7zM146 480h1v1h-1zM148 480h5v1h-5zM154 480h3v1h-3zM162 480h3v1h-3zM166 480h3v1h-3zM170 480h2v1h-2zM173 480h8v1h-8zM182 480h2v1h-2zM185 480h2v1h-2zM189 480h3v1h-3zM193 480h3v1h-3zM197 480h3v1h-3zM201 480h3v1h-3zM205 480h7v1h-7zM213 480h3v1h-3zM217 480h3v1h-3zM221 480h3v1h-3zM225 480h3v1h-3zM229 480h3v1h-3zM233 480h3v1h-3zM237 480h3v1h-3zM241 480h3v1h-3zM245 480h3v1h-3zM249 480h2v1h-2zM252 480h11v1h-11zM264 480h3v1h-3zM269 480h3v1h-3zM273 480h3v1h-3zM277 480h3v1h-3zM281 480h2v1h-2zM284 480h2v1h-2zM287 480h3v1h-3zM291 480h3v1h-3zM295 480h3v1h-3zM299 480h3v1h-3zM303 480h3v1h-3zM307 480h1v1h-1zM309 480h4v1h-4zM314 480h3v1h-3zM318 480h1v1h-1zM323 480h5v1h-5zM330 480h3v1h-3zM334 480h8v1h-8zM343 480h2v1h-2zM346 480h2v1h-2zM350 480h3v1h-3zM354 480h3v1h-3zM358 480h3v1h-3zM362 480h3v1h-3zM366 480h3v1h-3zM370 480h3v1h-3zM374 480h3v1h-3zM378 480h3v1h-3zM382 480h3v1h-3zM386 480h2v1h-2zM390 480h3v1h-3zM394 480h3v1h-3zM398 480h2v1h-2zM401 480h3v1h-3zM405 480h3v1h-3zM409 480h3v1h-3zM413 480h11v1h-11zM425 480h3v1h-3zM430 480h3v1h-3zM434 480h3v1h-3zM438 480h3v1h-3zM442 480h3v1h-3zM446 480h3v1h-3zM450 480h3v1h-3zM454 480h2v1h-2zM457 480h2v1h-2zM460 480h3v1h-3zM464 480h3v1h-3zM468 480h1v1h-1zM471 480h4v1h-4zM476 480h3v1h-3zM484 480h2v1h-2zM488 480h3v1h-3zM492 480h2v1h-2zM496 480h7v1h-7zM504 480h3v1h-3zM508 480h1v1h-1zM510 480h1v1h-1zM512 480h3v1h-3zM516 480h3v1h-3zM520 480h3v1h-3zM524 480h3v1h-3zM528 480h3v1h-3zM532 480h3v1h-3zM536 480h3v1h-3zM540 480h7v1h-7zM548 480h1v1h-1zM551 480h3v1h-3zM555 480h3v1h-3zM559 480h3v1h-3zM563 480h3v1h-3zM567 480h3v1h-3zM571 480h3v1h-3zM575 480h10v1h-10zM586 480h3v1h-3zM591 480h3v1h-3zM595 480h3v1h-3zM599 480h3v1h-3zM603 480h3v1h-3zM607 480h3v1h-3zM611 480h3v1h-3zM615 480h2v1h-2zM618 480h3v1h-3zM622 480h3v1h-3zM626 480h3v1h-3zM631 480h3v1h-3zM635 480h3v1h-3zM639 480h2v1h-2zM645 480h3v1h-3zM649 480h3v1h-3zM653 480h3v1h-3zM657 480h6v1h-6zM105 481h1v1h-1zM108 481h52v1h-52zM162 481h159v1h-159zM323 481h159v1h-159zM484 481h159v1h-159zM101 481h1v2h-1zM108 482h53v1h-53zM162 482h160v1h-160zM323 482h160v1h-160zM484 482h160v1h-160zM645 481h20v2h-20zM671 414h1v69h-1zM108 483h11v1h-11zM121 483h1v1h-1zM125 483h1v1h-1zM129 483h1v1h-1zM133 483h1v1h-1zM137 483h1v1h-1zM141 483h1v1h-1zM145 483h1v1h-1zM147 483h1v1h-1zM149 483h1v1h-1zM153 483h1v1h-1zM157 483h5v1h-5zM165 483h1v1h-1zM169 483h1v1h-1zM172 483h1v1h-1zM174 483h6v1h-6zM181 483h1v1h-1zM184 483h1v1h-1zM187 483h2v1h-2zM192 483h1v1h-1zM196 483h1v1h-1zM200 483h1v1h-1zM204 483h1v1h-1zM208 483h1v1h-1zM212 483h1v1h-1zM216 483h1v1h-1zM220 483h1v1h-1zM224 483h1v1h-1zM228 483h1v1h-1zM232 483h1v1h-1zM236 483h1v1h-1zM240 483h1v1h-1zM244 483h1v1h-1zM248 483h1v1h-1zM251 483h1v1h-1zM254 483h6v1h-6zM263 483h1v1h-1zM267 483h2v1h-2zM272 483h1v1h-1zM276 483h1v1h-1zM280 483h1v1h-1zM283 483h1v1h-1zM286 483h1v1h-1zM290 483h1v1h-1zM294 483h1v1h-1zM298 483h1v1h-1zM302 483h1v1h-1zM306 483h1v1h-1zM308 483h1v1h-1zM313 483h1v1h-1zM317 483h1v1h-1zM319 483h4v1h-4zM328 483h2v1h-2zM333 483h1v1h-1zM335 483h6v1h-6zM342 483h1v1h-1zM345 483h1v1h-1zM348 483h2v1h-2zM353 483h1v1h-1zM357 483h1v1h-1zM361 483h1v1h-1zM365 483h1v1h-1zM369 483h1v1h-1zM373 483h1v1h-1zM377 483h1v1h-1zM381 483h1v1h-1zM385 483h1v1h-1zM388 483h2v1h-2zM393 483h1v1h-1zM397 483h1v1h-1zM400 483h1v1h-1zM404 483h1v1h-1zM408 483h1v1h-1zM412 483h1v1h-1zM415 483h6v1h-6zM424 483h1v1h-1zM428 483h2v1h-2zM433 483h1v1h-1zM437 483h1v1h-1zM441 483h1v1h-1zM445 483h1v1h-1zM449 483h1v1h-1zM453 483h1v1h-1zM456 483h1v1h-1zM459 483h1v1h-1zM463 483h1v1h-1zM467 483h1v1h-1zM469 483h3v1h-3zM475 483h1v1h-1zM479 483h5v1h-5zM486 483h2v1h-2zM491 483h1v1h-1zM494 483h8v1h-8zM503 483h1v1h-1zM507 483h1v1h-1zM509 483h1v1h-1zM511 483h1v1h-1zM515 483h1v1h-1zM519 483h1v1h-1zM523 483h1v1h-1zM527 483h1v1h-1zM531 483h1v1h-1zM535 483h1v1h-1zM539 483h1v1h-1zM543 483h1v1h-1zM547 483h1v1h-1zM549 483h2v1h-2zM554 483h1v1h-1zM558 483h1v1h-1zM562 483h1v1h-1zM566 483h1v1h-1zM570 483h1v1h-1zM574 483h1v1h-1zM576 483h6v1h-6zM585 483h1v1h-1zM589 483h2v1h-2zM594 483h1v1h-1zM598 483h1v1h-1zM602 483h1v1h-1zM606 483h1v1h-1zM610 483h1v1h-1zM614 483h1v1h-1zM617 483h1v1h-1zM621 483h1v1h-1zM625 483h1v1h-1zM629 483h2v1h-2zM634 483h1v1h-1zM638 483h1v1h-1zM641 483h4v1h-4zM648 483h1v1h-1zM652 483h1v1h-1zM656 483h6v1h-6zM106 482h1v3h-1zM100 483h1v3h-1zM101 486h1v1h-1zM105 485h1v2h-1zM101 487h4v1h-4zM126 494h4v1h-4zM133 494h4v1h-4zM145 494h4v1h-4zM152 494h4v1h-4zM262 494h1v1h-1zM268 494h4v1h-4zM279 494h4v1h-4zM286 494h4v1h-4zM396 494h1v1h-1zM401 494h4v1h-4zM413 494h4v1h-4zM420 494h4v1h-4zM528 494h4v1h-4zM535 494h5v1h-5zM547 494h4v1h-4zM554 494h4v1h-4zM148 495h1v1h-1zM260 495h3v1h-3zM271 495h1v1h-1zM282 495h1v1h-1zM394 495h3v1h-3zM400 495h2v1h-2zM416 495h1v1h-1zM531 495h1v1h-1zM534 495h1v1h-1zM550 495h1v1h-1zM125 495h1v2h-1zM267 495h1v2h-1zM400 496h1v1h-1zM534 496h2v1h-2zM539 495h1v2h-1zM129 495h1v3h-1zM140 496h2v2h-2zM266 497h1v1h-1zM268 497h3v1h-3zM274 496h2v2h-2zM405 495h1v3h-1zM408 496h2v2h-2zM535 497h4v1h-4zM542 496h2v2h-2zM128 498h1v1h-1zM149 496h1v3h-1zM266 498h2v1h-2zM283 496h1v3h-1zM404 498h1v1h-1zM417 496h1v3h-1zM532 496h1v3h-1zM551 496h1v3h-1zM127 499h1v1h-1zM266 499h1v1h-1zM402 499h2v1h-2zM126 500h1v1h-1zM132 495h1v6h-1zM137 495h1v6h-1zM144 495h1v6h-1zM148 499h1v2h-1zM151 495h1v6h-1zM156 495h1v6h-1zM267 500h1v1h-1zM271 498h1v3h-1zM278 495h1v6h-1zM282 499h1v2h-1zM285 495h1v6h-1zM290 495h1v6h-1zM401 500h1v1h-1zM412 495h1v6h-1zM416 499h1v2h-1zM419 495h1v6h-1zM424 495h1v6h-1zM527 495h1v6h-1zM531 499h1v2h-1zM534 498h1v3h-1zM539 498h1v3h-1zM546 495h1v6h-1zM550 499h1v2h-1zM553 495h1v6h-1zM558 495h1v6h-1zM125 501h6v1h-6zM133 501h4v1h-4zM140 501h2v1h-2zM145 501h4v1h-4zM152 501h4v1h-4zM262 496h1v6h-1zM268 501h3v1h-3zM274 501h2v1h-2zM279 501h4v1h-4zM286 501h4v1h-4zM396 496h1v6h-1zM400 501h6v1h-6zM408 501h2v1h-2zM413 501h4v1h-4zM420 501h4v1h-4zM528 501h4v1h-4zM535 501h5v1h-5zM542 501h2v1h-2zM547 501h4v1h-4zM554 501h4v1h-4zM368 507h1v1h-1zM344 507h1v2h-1zM309 509h4v1h-4zM316 509h4v1h-4zM326 509h1v1h-1zM331 509h5v1h-5zM349 509h1v1h-1zM357 509h1v1h-1zM367 508h1v2h-1zM371 509h5v1h-5zM379 509h4v1h-4zM394 509h1v1h-1zM399 509h5v1h-5zM411 509h4v1h-4zM419 509h4v1h-4zM430 509h4v1h-4zM438 509h4v1h-4zM449 509h4v1h-4zM457 509h4v1h-4zM464 509h4v1h-4zM316 510h1v1h-1zM325 510h2v1h-2zM343 509h1v2h-1zM348 510h2v1h-2zM356 510h2v1h-2zM374 510h1v1h-1zM379 510h1v1h-1zM393 510h2v1h-2zM411 510h1v1h-1zM419 510h1v1h-1zM430 510h1v1h-1zM438 510h1v1h-1zM449 510h1v1h-1zM457 510h1v1h-1zM308 510h1v2h-1zM324 511h1v1h-1zM334 510h1v2h-1zM347 511h1v1h-1zM355 511h1v1h-1zM366 510h1v2h-1zM373 511h1v1h-1zM378 511h1v1h-1zM382 510h1v2h-1zM392 511h1v1h-1zM399 510h1v2h-1zM464 510h1v2h-1zM468 510h1v2h-1zM312 510h1v3h-1zM333 512h3v1h-3zM342 511h1v2h-1zM372 512h3v1h-3zM399 512h5v1h-5zM407 511h2v2h-2zM426 511h2v2h-2zM311 513h1v1h-1zM335 513h1v1h-1zM365 512h1v2h-1zM341 513h1v2h-1zM377 512h1v3h-1zM383 512h1v3h-1zM463 512h1v3h-1zM469 512h1v3h-1zM310 514h1v2h-1zM320 510h1v6h-1zM330 515h1v1h-1zM336 514h1v2h-1zM364 514h1v2h-1zM415 510h1v6h-1zM423 510h1v6h-1zM434 510h1v6h-1zM442 510h1v6h-1zM453 510h1v6h-1zM461 510h1v6h-1zM468 515h1v1h-1zM309 516h1v1h-1zM315 511h1v6h-1zM319 516h1v1h-1zM331 516h1v1h-1zM335 516h1v1h-1zM340 515h1v2h-1zM370 515h1v2h-1zM375 513h1v4h-1zM378 515h1v2h-1zM382 515h1v2h-1zM399 515h1v2h-1zM404 513h1v4h-1zM410 511h1v6h-1zM414 516h1v1h-1zM418 511h1v6h-1zM422 516h1v1h-1zM429 511h1v6h-1zM433 516h1v1h-1zM437 511h1v6h-1zM441 516h1v1h-1zM448 511h1v6h-1zM452 516h1v1h-1zM456 511h1v6h-1zM460 516h1v1h-1zM464 515h1v2h-1zM467 516h1v1h-1zM308 517h6v1h-6zM316 517h4v1h-4zM326 511h1v7h-1zM331 517h4v1h-4zM349 511h1v7h-1zM357 511h1v7h-1zM363 516h1v2h-1zM371 517h4v1h-4zM379 517h4v1h-4zM394 511h1v7h-1zM399 517h5v1h-5zM407 517h2v1h-2zM411 517h4v1h-4zM419 517h4v1h-4zM426 517h2v1h-2zM430 517h4v1h-4zM438 517h4v1h-4zM445 517h2v1h-2zM449 517h4v1h-4zM457 517h4v1h-4zM464 517h4v1h-4zM339 517h1v2h-1zM362 518h1v2h-1zM338 519h1v2h-1zM361 520h1v1h-1z"/><path fill="#7f7f7f" d="M168 133h19v34h-19zM189 133h39v34h-39zM229 133h39v34h-39zM269 133h60v34h-60zM490 133h19v34h-19zM510 133h39v34h-39zM551 133h39v34h-39zM591 133h60v34h-60zM168 168h140v34h-140zM309 168h20v34h-20zM490 168h140v34h-140zM631 168h20v34h-20zM168 203h140v34h-140zM310 203h19v34h-19zM490 203h140v34h-140zM631 203h20v34h-20zM168 238h152v35h-152zM321 238h8v35h-8zM490 238h152v35h-152zM643 238h8v35h-8zM168 274h152v34h-152zM323 274h6v34h-6zM490 274h152v34h-152zM644 274h7v34h-7zM168 309h7v34h-7zM177 309h78v34h-78zM258 309h71v34h-71zM490 309h6v34h-6zM499 309h78v34h-78zM580 309h71v34h-71zM170 344h1v34h-1zM174 344h3v34h-3zM178 344h1v34h-1zM182 344h1v34h-1zM186 344h1v34h-1zM188 344h1v34h-1zM190 344h1v34h-1zM194 344h1v34h-1zM198 344h1v34h-1zM202 344h1v34h-1zM206 344h1v34h-1zM210 344h1v34h-1zM214 344h1v34h-1zM218 344h1v34h-1zM222 344h1v34h-1zM229 344h1v34h-1zM233 344h1v34h-1zM237 344h1v34h-1zM241 344h1v34h-1zM245 344h1v34h-1zM249 344h1v34h-1zM253 344h1v34h-1zM256 344h2v34h-2zM262 344h1v34h-1zM266 344h1v34h-1zM269 344h1v34h-1zM273 344h1v34h-1zM277 344h1v34h-1zM281 344h1v34h-1zM284 344h1v34h-1zM288 344h1v34h-1zM292 344h1v34h-1zM296 344h1v34h-1zM300 344h1v34h-1zM304 344h1v34h-1zM308 344h1v34h-1zM310 344h1v34h-1zM314 344h1v34h-1zM318 344h1v34h-1zM321 344h2v34h-2zM324 344h1v34h-1zM328 344h1v34h-1zM493 344h1v34h-1zM496 344h3v34h-3zM502 344h1v34h-1zM506 344h1v34h-1zM509 344h2v34h-2zM513 344h1v34h-1zM517 344h1v34h-1zM521 344h1v34h-1zM525 344h1v34h-1zM529 344h1v34h-1zM533 344h1v34h-1zM537 344h1v34h-1zM541 344h1v34h-1zM545 344h1v34h-1zM549 344h1v34h-1zM553 344h1v34h-1zM556 344h1v34h-1zM560 344h1v34h-1zM564 344h1v34h-1zM568 344h1v34h-1zM572 344h1v34h-1zM576 344h4v34h-4zM583 344h1v34h-1zM586 344h1v34h-1zM590 344h2v34h-2zM595 344h1v34h-1zM599 344h1v34h-1zM603 344h1v34h-1zM607 344h1v34h-1zM611 344h1v34h-1zM615 344h1v34h-1zM619 344h1v34h-1zM623 344h1v34h-1zM627 344h1v34h-1zM630 344h2v34h-2zM635 344h1v34h-1zM638 344h1v34h-1zM642 344h4v34h-4zM650 344h1v34h-1zM169 379h1v34h-1zM172 379h1v34h-1zM175 379h3v34h-3zM181 379h1v34h-1zM184 379h1v34h-1zM187 379h2v34h-2zM192 379h1v34h-1zM196 379h1v34h-1zM200 379h1v34h-1zM204 379h1v34h-1zM208 379h1v34h-1zM212 379h1v34h-1zM216 379h1v34h-1zM220 379h1v34h-1zM224 379h1v34h-1zM228 379h1v34h-1zM232 379h1v34h-1zM236 379h1v34h-1zM240 379h1v34h-1zM244 379h1v34h-1zM248 379h1v34h-1zM251 379h1v34h-1zM255 379h3v34h-3zM259 379h1v34h-1zM263 379h1v34h-1zM267 379h2v34h-2zM272 379h1v34h-1zM276 379h1v34h-1zM280 379h1v34h-1zM283 379h1v34h-1zM286 379h1v34h-1zM290 379h1v34h-1zM294 379h1v34h-1zM298 379h1v34h-1zM302 379h1v34h-1zM306 379h1v34h-1zM308 379h1v34h-1zM313 379h1v34h-1zM317 379h1v34h-1zM320 379h3v34h-3zM328 379h1v34h-1zM491 379h1v34h-1zM494 379h2v34h-2zM497 379h3v34h-3zM503 379h1v34h-1zM507 379h1v34h-1zM509 379h1v34h-1zM511 379h1v34h-1zM515 379h1v34h-1zM519 379h1v34h-1zM523 379h1v34h-1zM527 379h1v34h-1zM531 379h1v34h-1zM535 379h1v34h-1zM539 379h1v34h-1zM543 379h1v34h-1zM547 379h1v34h-1zM549 379h2v34h-2zM554 379h1v34h-1zM558 379h1v34h-1zM562 379h1v34h-1zM566 379h1v34h-1zM570 379h1v34h-1zM574 379h1v34h-1zM577 379h3v34h-3zM581 379h1v34h-1zM585 379h1v34h-1zM589 379h2v34h-2zM594 379h1v34h-1zM598 379h1v34h-1zM602 379h1v34h-1zM606 379h1v34h-1zM610 379h1v34h-1zM614 379h1v34h-1zM617 379h1v34h-1zM621 379h1v34h-1zM625 379h1v34h-1zM629 379h2v34h-2zM634 379h1v34h-1zM638 379h1v34h-1zM642 379h3v34h-3zM648 379h1v34h-1z"/><path fill="#00ff00" d="M187 132h2v35h-2zM228 132h1v35h-1zM268 132h1v35h-1zM349 132h1v35h-1zM388 132h2v35h-2zM509 132h1v35h-1zM590 132h1v35h-1zM147 167h1v35h-1zM469 167h1v35h-1zM147 202h2v35h-2zM469 202h2v35h-2zM114 343h1v35h-1zM116 343h1v35h-1zM118 343h1v35h-1zM120 343h1v35h-1zM122 343h1v35h-1zM124 343h1v35h-1zM126 343h1v35h-1zM128 343h1v35h-1zM130 343h1v35h-1zM132 343h1v35h-1zM134 343h1v35h-1zM136 343h1v35h-1zM138 343h1v35h-1zM140 343h1v35h-1zM142 343h1v35h-1zM144 343h1v35h-1zM146 343h1v35h-1zM149 343h2v35h-2zM152 343h1v35h-1zM154 343h1v35h-1zM156 343h1v35h-1zM158 343h1v35h-1zM163 343h1v35h-1zM165 343h3v35h-3zM169 343h1v35h-1zM171 343h1v35h-1zM173 343h1v35h-1zM177 343h1v35h-1zM179 343h1v35h-1zM181 343h1v35h-1zM183 343h1v35h-1zM185 343h1v35h-1zM187 343h1v35h-1zM189 343h1v35h-1zM191 343h1v35h-1zM193 343h1v35h-1zM195 343h1v35h-1zM197 343h1v35h-1zM199 343h1v35h-1zM201 343h1v35h-1zM203 343h1v35h-1zM205 343h1v35h-1zM207 343h1v35h-1zM209 343h1v35h-1zM211 343h1v35h-1zM213 343h1v35h-1zM215 343h1v35h-1zM217 343h1v35h-1zM219 343h1v35h-1zM221 343h1v35h-1zM223 343h1v35h-1zM225 343h2v35h-2zM228 343h1v35h-1zM230 343h1v35h-1zM232 343h1v35h-1zM234 343h1v35h-1zM236 343h1v35h-1zM238 343h1v35h-1zM240 343h1v35h-1zM242 343h1v35h-1zM244 343h1v35h-1zM246 343h1v35h-1zM248 343h1v35h-1zM250 343h1v35h-1zM252 343h1v35h-1zM254 343h2v35h-2zM258 343h1v35h-1zM261 343h1v35h-1zM263 343h1v35h-1zM265 343h1v35h-1zM267 343h2v35h-2zM270 343h1v35h-1zM272 343h1v35h-1zM274 343h1v35h-1zM276 343h1v35h-1zM278 343h1v35h-1zM280 343h1v35h-1zM282 343h2v35h-2zM285 343h1v35h-1zM287 343h1v35h-1zM289 343h1v35h-1zM291 343h1v35h-1zM293 343h1v35h-1zM295 343h1v35h-1zM297 343h1v35h-1zM299 343h1v35h-1zM301 343h1v35h-1zM303 343h1v35h-1zM305 343h1v35h-1zM307 343h1v35h-1zM309 343h1v35h-1zM311 343h1v35h-1zM313 343h1v35h-1zM315 343h1v35h-1zM317 343h1v35h-1zM319 343h2v35h-2zM323 343h1v35h-1zM325 343h1v35h-1zM327 343h1v35h-1zM329 343h1v35h-1zM331 343h1v35h-1zM333 343h2v35h-2zM338 343h1v35h-1zM340 343h1v35h-1zM342 343h1v35h-1zM344 343h1v35h-1zM346 343h1v35h-1zM348 343h1v35h-1zM350 343h1v35h-1zM352 343h1v35h-1zM354 343h1v35h-1zM356 343h1v35h-1zM358 343h1v35h-1zM360 343h1v35h-1zM362 343h1v35h-1zM364 343h1v35h-1zM366 343h1v35h-1zM368 343h1v35h-1zM370 343h1v35h-1zM372 343h1v35h-1zM374 343h1v35h-1zM376 343h1v35h-1zM378 343h1v35h-1zM380 343h1v35h-1zM382 343h1v35h-1zM384 343h1v35h-1zM386 343h1v35h-1zM388 343h1v35h-1zM390 343h1v35h-1zM392 343h1v35h-1zM394 343h1v35h-1zM396 343h1v35h-1zM398 343h1v35h-1zM400 343h2v35h-2zM403 343h1v35h-1zM405 343h1v35h-1zM407 343h1v35h-1zM409 343h1v35h-1zM411 343h1v35h-1zM413 343h1v35h-1zM415 343h1v35h-1zM419 343h1v35h-1zM421 343h1v35h-1zM423 343h1v35h-1zM425 343h1v35h-1zM427 343h2v35h-2zM431 343h1v35h-1zM433 343h1v35h-1zM435 343h1v35h-1zM437 343h1v35h-1zM439 343h1v35h-1zM441 343h1v35h-1zM443 343h1v35h-1zM445 343h1v35h-1zM447 343h1v35h-1zM449 343h1v35h-1zM451 343h1v35h-1zM453 343h1v35h-1zM455 343h1v35h-1zM457 343h1v35h-1zM459 343h2v35h-2zM462 343h1v35h-1zM464 343h1v35h-1zM466 343h1v35h-1zM468 343h1v35h-1zM470 343h1v35h-1zM472 343h1v35h-1zM474 343h1v35h-1zM476 343h1v35h-1zM478 343h1v35h-1zM480 343h1v35h-1zM485 343h1v35h-1zM488 343h1v35h-1zM490 343h1v35h-1zM492 343h1v35h-1zM494 343h2v35h-2zM499 343h1v35h-1zM501 343h1v35h-1zM503 343h1v35h-1zM505 343h1v35h-1zM507 343h2v35h-2zM511 343h2v35h-2zM514 343h1v35h-1zM516 343h1v35h-1zM518 343h1v35h-1zM520 343h1v35h-1zM522 343h1v35h-1zM524 343h1v35h-1zM526 343h1v35h-1zM528 343h1v35h-1zM530 343h1v35h-1zM532 343h1v35h-1zM534 343h1v35h-1zM536 343h1v35h-1zM538 343h1v35h-1zM540 343h1v35h-1zM542 343h1v35h-1zM544 343h1v35h-1zM546 343h1v35h-1zM548 343h1v35h-1zM550 343h1v35h-1zM552 343h1v35h-1zM554 343h2v35h-2zM557 343h1v35h-1zM559 343h1v35h-1zM561 343h1v35h-1zM563 343h1v35h-1zM565 343h1v35h-1zM567 343h1v35h-1zM569 343h1v35h-1zM571 343h1v35h-1zM573 343h1v35h-1zM575 343h1v35h-1zM580 343h1v35h-1zM582 343h1v35h-1zM584 343h2v35h-2zM587 343h1v35h-1zM589 343h1v35h-1zM592 343h1v35h-1zM594 343h1v35h-1zM596 343h1v35h-1zM598 343h1v35h-1zM600 343h1v35h-1zM602 343h1v35h-1zM604 343h1v35h-1zM606 343h1v35h-1zM608 343h1v35h-1zM610 343h1v35h-1zM612 343h1v35h-1zM614 343h1v35h-1zM616 343h1v35h-1zM618 343h1v35h-1zM620 343h1v35h-1zM622 343h1v35h-1zM624 343h1v35h-1zM626 343h1v35h-1zM628 343h2v35h-2zM632 343h1v35h-1zM634 343h1v35h-1zM636 343h2v35h-2zM639 343h1v35h-1zM641 343h1v35h-1zM646 343h1v35h-1zM649 343h1v35h-1zM651 343h1v35h-1zM653 343h1v35h-1zM655 343h2v35h-2zM660 343h2v35h-2zM36 513h3v1h-3zM42 513h3v1h-3zM39 514h1v1h-1zM41 514h2v1h-2zM45 514h1v2h-1zM44 516h1v1h-1zM43 517h1v1h-1zM35 514h1v5h-1zM39 518h1v1h-1zM42 518h1v1h-1zM36 519h3v1h-3zM41 519h5v1h-5z"/><path fill="#00cc00" d="M348 132h1v35h-1zM429 132h1v35h-1zM549 132h2v35h-2zM308 167h1v35h-1zM308 202h2v35h-2zM630 167h1v70h-1zM117 343h1v35h-1zM121 343h1v35h-1zM125 343h1v35h-1zM129 343h1v35h-1zM133 343h1v35h-1zM137 343h1v35h-1zM141 343h1v35h-1zM145 343h1v35h-1zM153 343h1v35h-1zM157 343h1v35h-1zM168 343h1v35h-1zM172 343h1v35h-1zM180 343h1v35h-1zM184 343h1v35h-1zM192 343h1v35h-1zM196 343h1v35h-1zM200 343h1v35h-1zM204 343h1v35h-1zM208 343h1v35h-1zM212 343h1v35h-1zM216 343h1v35h-1zM220 343h1v35h-1zM224 343h1v35h-1zM227 343h1v35h-1zM231 343h1v35h-1zM235 343h1v35h-1zM239 343h1v35h-1zM243 343h1v35h-1zM247 343h1v35h-1zM251 343h1v35h-1zM259 343h2v35h-2zM264 343h1v35h-1zM271 343h1v35h-1zM275 343h1v35h-1zM279 343h1v35h-1zM286 343h1v35h-1zM290 343h1v35h-1zM294 343h1v35h-1zM298 343h1v35h-1zM302 343h1v35h-1zM306 343h1v35h-1zM312 343h1v35h-1zM316 343h1v35h-1zM326 343h1v35h-1zM330 343h1v35h-1zM341 343h1v35h-1zM345 343h1v35h-1zM353 343h1v35h-1zM357 343h1v35h-1zM361 343h1v35h-1zM365 343h1v35h-1zM369 343h1v35h-1zM373 343h1v35h-1zM377 343h1v35h-1zM381 343h1v35h-1zM385 343h1v35h-1zM393 343h1v35h-1zM397 343h1v35h-1zM404 343h1v35h-1zM408 343h1v35h-1zM412 343h1v35h-1zM420 343h1v35h-1zM424 343h1v35h-1zM432 343h1v35h-1zM436 343h1v35h-1zM440 343h1v35h-1zM444 343h1v35h-1zM448 343h1v35h-1zM452 343h1v35h-1zM456 343h1v35h-1zM463 343h1v35h-1zM467 343h1v35h-1zM471 343h1v35h-1zM475 343h1v35h-1zM479 343h1v35h-1zM486 343h2v35h-2zM491 343h1v35h-1zM500 343h1v35h-1zM504 343h1v35h-1zM515 343h1v35h-1zM519 343h1v35h-1zM523 343h1v35h-1zM527 343h1v35h-1zM531 343h1v35h-1zM535 343h1v35h-1zM539 343h1v35h-1zM543 343h1v35h-1zM547 343h1v35h-1zM551 343h1v35h-1zM558 343h1v35h-1zM562 343h1v35h-1zM566 343h1v35h-1zM570 343h1v35h-1zM574 343h1v35h-1zM581 343h1v35h-1zM588 343h1v35h-1zM593 343h1v35h-1zM597 343h1v35h-1zM601 343h1v35h-1zM605 343h1v35h-1zM609 343h1v35h-1zM613 343h1v35h-1zM617 343h1v35h-1zM621 343h1v35h-1zM625 343h1v35h-1zM633 343h1v35h-1zM640 343h1v35h-1zM647 343h2v35h-2zM652 343h1v35h-1z"/><path fill="#91ecf6" d="M159 237h1v36h-1zM481 237h1v36h-1zM159 273h3v35h-3zM481 273h2v35h-2zM115 378h1v35h-1zM119 378h1v35h-1zM123 378h1v35h-1zM127 378h1v35h-1zM131 378h1v35h-1zM135 378h1v35h-1zM139 378h1v35h-1zM143 378h1v35h-1zM146 378h1v35h-1zM151 378h1v35h-1zM155 378h1v35h-1zM158 378h1v35h-1zM163 378h1v35h-1zM167 378h1v35h-1zM171 378h1v35h-1zM174 378h1v35h-1zM179 378h1v35h-1zM183 378h1v35h-1zM186 378h1v35h-1zM190 378h1v35h-1zM194 378h1v35h-1zM198 378h1v35h-1zM202 378h1v35h-1zM206 378h1v35h-1zM210 378h1v35h-1zM214 378h1v35h-1zM218 378h1v35h-1zM222 378h1v35h-1zM226 378h1v35h-1zM230 378h1v35h-1zM234 378h1v35h-1zM238 378h1v35h-1zM242 378h1v35h-1zM246 378h1v35h-1zM250 378h1v35h-1zM253 378h1v35h-1zM261 378h1v35h-1zM265 378h1v35h-1zM270 378h1v35h-1zM274 378h1v35h-1zM278 378h1v35h-1zM282 378h1v35h-1zM285 378h1v35h-1zM288 378h1v35h-1zM292 378h1v35h-1zM296 378h1v35h-1zM300 378h1v35h-1zM304 378h1v35h-1zM307 378h1v35h-1zM310 378h2v35h-2zM315 378h1v35h-1zM319 378h1v35h-1zM324 378h1v35h-1zM327 378h1v35h-1zM331 378h1v35h-1zM334 378h1v35h-1zM340 378h1v35h-1zM344 378h1v35h-1zM347 378h1v35h-1zM351 378h1v35h-1zM355 378h1v35h-1zM359 378h1v35h-1zM363 378h1v35h-1zM367 378h1v35h-1zM371 378h1v35h-1zM375 378h1v35h-1zM379 378h1v35h-1zM383 378h1v35h-1zM387 378h1v35h-1zM391 378h1v35h-1zM395 378h1v35h-1zM399 378h1v35h-1zM402 378h1v35h-1zM406 378h1v35h-1zM410 378h1v35h-1zM414 378h1v35h-1zM422 378h1v35h-1zM426 378h1v35h-1zM431 378h1v35h-1zM435 378h1v35h-1zM439 378h1v35h-1zM443 378h1v35h-1zM447 378h1v35h-1zM451 378h1v35h-1zM455 378h1v35h-1zM458 378h1v35h-1zM461 378h1v35h-1zM465 378h1v35h-1zM468 378h1v35h-1zM473 378h1v35h-1zM477 378h1v35h-1zM485 378h1v35h-1zM489 378h1v35h-1zM493 378h1v35h-1zM501 378h1v35h-1zM505 378h1v35h-1zM508 378h1v35h-1zM513 378h1v35h-1zM517 378h1v35h-1zM521 378h1v35h-1zM525 378h1v35h-1zM529 378h1v35h-1zM533 378h1v35h-1zM537 378h1v35h-1zM541 378h1v35h-1zM545 378h1v35h-1zM552 378h1v35h-1zM556 378h1v35h-1zM560 378h1v35h-1zM564 378h1v35h-1zM568 378h1v35h-1zM572 378h1v35h-1zM576 378h1v35h-1zM583 378h1v35h-1zM587 378h1v35h-1zM592 378h1v35h-1zM596 378h1v35h-1zM600 378h1v35h-1zM604 378h1v35h-1zM608 378h1v35h-1zM612 378h1v35h-1zM616 378h1v35h-1zM619 378h1v35h-1zM623 378h1v35h-1zM627 378h1v35h-1zM632 378h1v35h-1zM636 378h1v35h-1zM640 378h1v35h-1zM646 378h1v35h-1zM650 378h1v35h-1zM654 378h1v35h-1zM662 378h1v35h-1zM57 513h3v1h-3zM63 513h4v1h-4zM60 514h1v1h-1zM65 514h1v1h-1zM64 515h2v1h-2zM56 514h1v5h-1zM60 518h1v1h-1zM62 518h1v1h-1zM66 516h1v3h-1zM57 519h3v1h-3zM63 519h3v1h-3z"/><path fill="#00d0ee" d="M320 237h1v36h-1zM642 237h1v36h-1zM320 273h3v35h-3zM642 273h2v35h-2zM114 378h1v35h-1zM116 378h1v35h-1zM118 378h1v35h-1zM120 378h1v35h-1zM122 378h1v35h-1zM124 378h1v35h-1zM126 378h1v35h-1zM128 378h1v35h-1zM130 378h1v35h-1zM132 378h1v35h-1zM134 378h1v35h-1zM136 378h1v35h-1zM138 378h1v35h-1zM140 378h1v35h-1zM142 378h1v35h-1zM144 378h1v35h-1zM148 378h1v35h-1zM150 378h1v35h-1zM152 378h1v35h-1zM154 378h1v35h-1zM156 378h1v35h-1zM162 378h1v35h-1zM164 378h1v35h-1zM166 378h1v35h-1zM168 378h1v35h-1zM170 378h1v35h-1zM173 378h1v35h-1zM178 378h1v35h-1zM180 378h1v35h-1zM182 378h1v35h-1zM185 378h1v35h-1zM189 378h1v35h-1zM191 378h1v35h-1zM193 378h1v35h-1zM195 378h1v35h-1zM197 378h1v35h-1zM199 378h1v35h-1zM201 378h1v35h-1zM203 378h1v35h-1zM205 378h1v35h-1zM207 378h1v35h-1zM209 378h1v35h-1zM211 378h1v35h-1zM213 378h1v35h-1zM215 378h1v35h-1zM217 378h1v35h-1zM219 378h1v35h-1zM221 378h1v35h-1zM223 378h1v35h-1zM225 378h1v35h-1zM227 378h1v35h-1zM229 378h1v35h-1zM231 378h1v35h-1zM233 378h1v35h-1zM235 378h1v35h-1zM237 378h1v35h-1zM239 378h1v35h-1zM241 378h1v35h-1zM243 378h1v35h-1zM245 378h1v35h-1zM247 378h1v35h-1zM249 378h1v35h-1zM252 378h1v35h-1zM254 378h1v35h-1zM258 378h1v35h-1zM260 378h1v35h-1zM262 378h1v35h-1zM264 378h1v35h-1zM266 378h1v35h-1zM269 378h1v35h-1zM271 378h1v35h-1zM273 378h1v35h-1zM275 378h1v35h-1zM277 378h1v35h-1zM279 378h1v35h-1zM281 378h1v35h-1zM284 378h1v35h-1zM287 378h1v35h-1zM289 378h1v35h-1zM291 378h1v35h-1zM293 378h1v35h-1zM295 378h1v35h-1zM297 378h1v35h-1zM299 378h1v35h-1zM301 378h1v35h-1zM303 378h1v35h-1zM305 378h1v35h-1zM309 378h1v35h-1zM312 378h1v35h-1zM314 378h1v35h-1zM316 378h1v35h-1zM318 378h1v35h-1zM323 378h1v35h-1zM325 378h2v35h-2zM330 378h1v35h-1zM332 378h1v35h-1zM339 378h1v35h-1zM341 378h1v35h-1zM343 378h1v35h-1zM346 378h1v35h-1zM350 378h1v35h-1zM352 378h1v35h-1zM354 378h1v35h-1zM356 378h1v35h-1zM358 378h1v35h-1zM360 378h1v35h-1zM362 378h1v35h-1zM364 378h1v35h-1zM366 378h1v35h-1zM368 378h1v35h-1zM370 378h1v35h-1zM372 378h1v35h-1zM374 378h1v35h-1zM376 378h1v35h-1zM378 378h1v35h-1zM380 378h1v35h-1zM382 378h1v35h-1zM384 378h1v35h-1zM386 378h1v35h-1zM390 378h1v35h-1zM392 378h1v35h-1zM394 378h1v35h-1zM396 378h1v35h-1zM398 378h1v35h-1zM401 378h1v35h-1zM403 378h1v35h-1zM405 378h1v35h-1zM407 378h1v35h-1zM409 378h1v35h-1zM411 378h1v35h-1zM413 378h1v35h-1zM415 378h1v35h-1zM419 378h1v35h-1zM421 378h1v35h-1zM423 378h1v35h-1zM425 378h1v35h-1zM427 378h1v35h-1zM430 378h1v35h-1zM432 378h1v35h-1zM434 378h1v35h-1zM436 378h1v35h-1zM438 378h1v35h-1zM440 378h1v35h-1zM442 378h1v35h-1zM444 378h1v35h-1zM446 378h1v35h-1zM448 378h1v35h-1zM450 378h1v35h-1zM452 378h1v35h-1zM454 378h1v35h-1zM457 378h1v35h-1zM460 378h1v35h-1zM462 378h1v35h-1zM464 378h1v35h-1zM466 378h1v35h-1zM472 378h1v35h-1zM474 378h1v35h-1zM476 378h1v35h-1zM478 378h1v35h-1zM480 378h1v35h-1zM484 378h1v35h-1zM488 378h1v35h-1zM490 378h1v35h-1zM492 378h1v35h-1zM496 378h1v35h-1zM500 378h1v35h-1zM502 378h1v35h-1zM504 378h1v35h-1zM506 378h1v35h-1zM510 378h1v35h-1zM512 378h1v35h-1zM514 378h1v35h-1zM516 378h1v35h-1zM518 378h1v35h-1zM520 378h1v35h-1zM522 378h1v35h-1zM524 378h1v35h-1zM526 378h1v35h-1zM528 378h1v35h-1zM530 378h1v35h-1zM532 378h1v35h-1zM534 378h1v35h-1zM536 378h1v35h-1zM538 378h1v35h-1zM540 378h1v35h-1zM542 378h1v35h-1zM544 378h1v35h-1zM546 378h1v35h-1zM548 378h1v35h-1zM551 378h1v35h-1zM553 378h1v35h-1zM555 378h1v35h-1zM557 378h1v35h-1zM559 378h1v35h-1zM561 378h1v35h-1zM563 378h1v35h-1zM565 378h1v35h-1zM567 378h1v35h-1zM569 378h1v35h-1zM571 378h1v35h-1zM573 378h1v35h-1zM575 378h1v35h-1zM580 378h1v35h-1zM582 378h1v35h-1zM584 378h1v35h-1zM586 378h1v35h-1zM588 378h1v35h-1zM591 378h1v35h-1zM593 378h1v35h-1zM595 378h1v35h-1zM597 378h1v35h-1zM599 378h1v35h-1zM601 378h1v35h-1zM603 378h1v35h-1zM605 378h1v35h-1zM607 378h1v35h-1zM609 378h1v35h-1zM611 378h1v35h-1zM613 378h1v35h-1zM615 378h1v35h-1zM618 378h1v35h-1zM620 378h1v35h-1zM622 378h1v35h-1zM624 378h1v35h-1zM626 378h1v35h-1zM628 378h1v35h-1zM631 378h1v35h-1zM633 378h1v35h-1zM635 378h1v35h-1zM637 378h1v35h-1zM639 378h1v35h-1zM641 378h1v35h-1zM645 378h1v35h-1zM647 378h1v35h-1zM649 378h1v35h-1zM651 378h1v35h-1zM653 378h1v35h-1zM655 378h1v35h-1zM657 378h1v35h-1zM661 378h1v35h-1z"/><path fill="#ffff00" d="M175 308h2v35h-2zM335 308h3v35h-3zM496 308h3v35h-3zM657 308h3v35h-3zM77 513h6v1h-6zM84 513h5v1h-5zM77 514h1v2h-1zM77 516h3v1h-3zM77 517h1v2h-1zM82 514h1v5h-1zM77 519h6v1h-6zM86 514h1v6h-1z"/><path fill="#cccc00" d="M255 308h3v35h-3zM416 308h3v35h-3zM577 308h3v35h-3z"/><path fill="#ff0000" d="M119 483h2v1h-2zM122 483h3v1h-3zM126 483h3v1h-3zM130 483h3v1h-3zM134 483h3v1h-3zM138 483h3v1h-3zM142 483h3v1h-3zM146 483h1v1h-1zM148 483h1v1h-1zM150 483h3v1h-3zM154 483h3v1h-3zM162 483h3v1h-3zM166 483h3v1h-3zM170 483h2v1h-2zM173 483h1v1h-1zM180 483h1v1h-1zM182 483h2v1h-2zM185 483h2v1h-2zM189 483h3v1h-3zM193 483h3v1h-3zM197 483h3v1h-3zM201 483h3v1h-3zM205 483h3v1h-3zM209 483h3v1h-3zM213 483h3v1h-3zM217 483h3v1h-3zM221 483h3v1h-3zM225 483h3v1h-3zM229 483h3v1h-3zM233 483h3v1h-3zM237 483h3v1h-3zM241 483h3v1h-3zM245 483h3v1h-3zM249 483h2v1h-2zM252 483h2v1h-2zM260 483h3v1h-3zM264 483h3v1h-3zM269 483h3v1h-3zM273 483h3v1h-3zM277 483h3v1h-3zM281 483h2v1h-2zM284 483h2v1h-2zM287 483h3v1h-3zM291 483h3v1h-3zM295 483h3v1h-3zM299 483h3v1h-3zM303 483h3v1h-3zM307 483h1v1h-1zM309 483h4v1h-4zM314 483h3v1h-3zM318 483h1v1h-1zM323 483h5v1h-5zM330 483h3v1h-3zM334 483h1v1h-1zM341 483h1v1h-1zM343 483h2v1h-2zM346 483h2v1h-2zM350 483h3v1h-3zM354 483h3v1h-3zM358 483h3v1h-3zM362 483h3v1h-3zM366 483h3v1h-3zM370 483h3v1h-3zM374 483h3v1h-3zM378 483h3v1h-3zM382 483h3v1h-3zM386 483h2v1h-2zM390 483h3v1h-3zM394 483h3v1h-3zM398 483h2v1h-2zM401 483h3v1h-3zM405 483h3v1h-3zM409 483h3v1h-3zM413 483h2v1h-2zM421 483h3v1h-3zM425 483h3v1h-3zM430 483h3v1h-3zM434 483h3v1h-3zM438 483h3v1h-3zM442 483h3v1h-3zM446 483h3v1h-3zM450 483h3v1h-3zM454 483h2v1h-2zM457 483h2v1h-2zM460 483h3v1h-3zM464 483h3v1h-3zM468 483h1v1h-1zM472 483h3v1h-3zM476 483h3v1h-3zM484 483h2v1h-2zM488 483h3v1h-3zM492 483h2v1h-2zM502 483h1v1h-1zM504 483h3v1h-3zM508 483h1v1h-1zM510 483h1v1h-1zM512 483h3v1h-3zM516 483h3v1h-3zM520 483h3v1h-3zM524 483h3v1h-3zM528 483h3v1h-3zM532 483h3v1h-3zM536 483h3v1h-3zM540 483h3v1h-3zM544 483h3v1h-3zM548 483h1v1h-1zM551 483h3v1h-3zM555 483h3v1h-3zM559 483h3v1h-3zM563 483h3v1h-3zM567 483h3v1h-3zM571 483h3v1h-3zM575 483h1v1h-1zM582 483h3v1h-3zM586 483h3v1h-3zM591 483h3v1h-3zM595 483h3v1h-3zM599 483h3v1h-3zM603 483h3v1h-3zM607 483h3v1h-3zM611 483h3v1h-3zM615 483h2v1h-2zM618 483h3v1h-3zM622 483h3v1h-3zM626 483h3v1h-3zM631 483h3v1h-3zM635 483h3v1h-3zM639 483h2v1h-2zM645 483h3v1h-3zM649 483h3v1h-3zM653 483h3v1h-3zM662 483h10v1h-10zM15 513h3v1h-3zM23 513h1v1h-1zM18 514h1v1h-1zM21 514h3v1h-3zM14 514h1v5h-1zM18 518h1v1h-1zM15 519h3v1h-3zM23 515h1v5h-1z"/></svg></body></html>
